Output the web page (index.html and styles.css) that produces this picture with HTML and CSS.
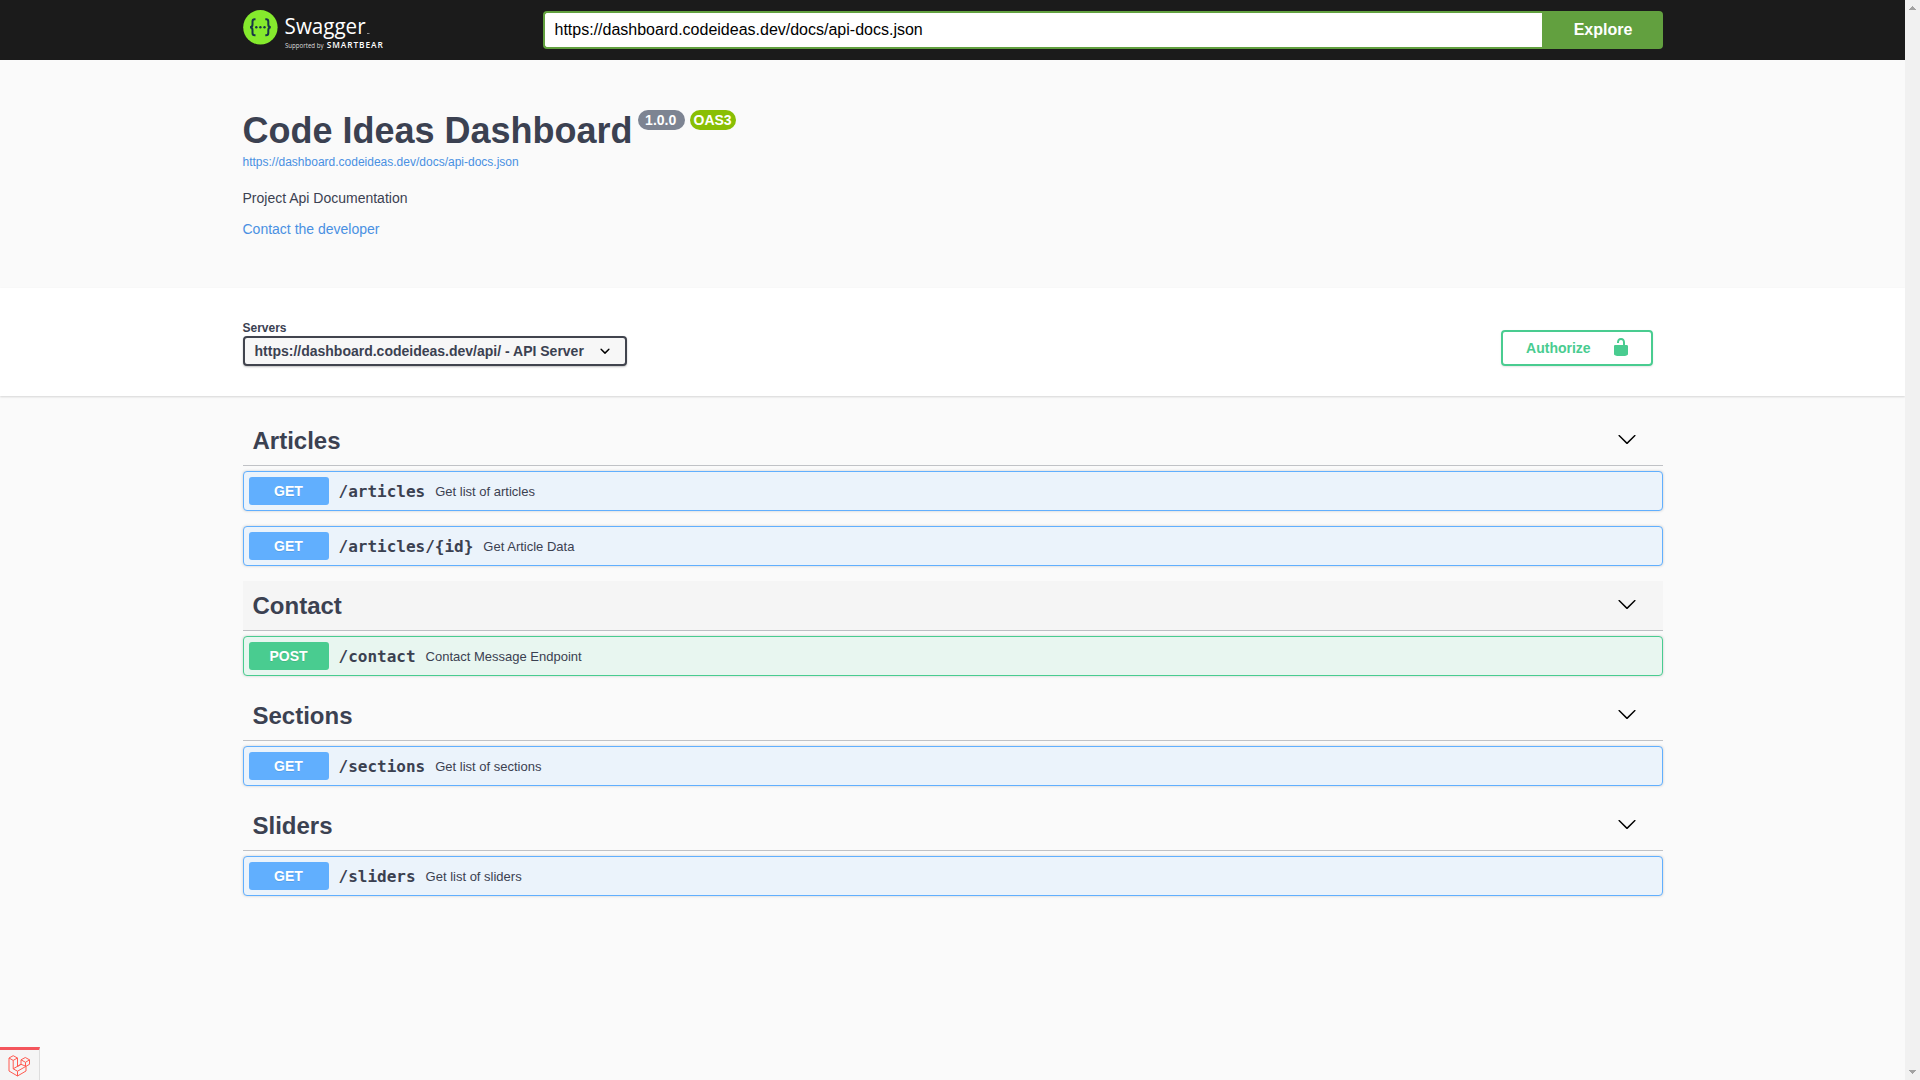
FILE: index.html
```html
<!DOCTYPE html>
<html lang="en">
<head>
<meta charset="utf-8">
<title>Code Ideas Dashboard</title>
<link rel="stylesheet" href="styles.css">
</head>
<body>
<svg class="defs" width="0" height="0" aria-hidden="true">
  <symbol id="arrow" viewBox="0 0 20 20"><path d="M17.418 6.109c.272-.268.709-.268.979 0s.271.701 0 .969l-7.908 7.83c-.27.268-.707.268-.979 0l-7.908-7.83c-.27-.268-.27-.701 0-.969.271-.268.709-.268.979 0L10 13.25l7.418-7.141z"/></symbol>
</svg>
<div class="app">
  <main class="page">
    <header class="topbar">
      <div class="wrapper topbar-row">
        <a class="logo">
          <svg width="150" height="40" viewBox="0 0 150 40">
            <circle cx="17.4" cy="17.3" r="17.2" fill="#85ea2d"/>
            <g fill="none" stroke="#173647" stroke-width="2">
              <path d="M12.5 9.300h-.8q-2.200 0-2.200 2.200v3q0 2.800-2.500 2.800 2.500 0 2.500 2.800v3q0 2.200 2.200 2.200h.8"/>
              <path d="M22.300 9.300h.8q2.200 0 2.200 2.200v3q0 2.800 2.500 2.800-2.500 0-2.500 2.800v3q0 2.200-2.200 2.200h-.8"/>
            </g>
            <g fill="#173647"><circle cx="13.300" cy="17.300" r="1.200"/><circle cx="17.400" cy="17.300" r="1.200"/><circle cx="21.500" cy="17.300" r="1.200"/></g>
            <text class="logo-name" x="41.600" y="24.400" textLength="81" lengthAdjust="spacingAndGlyphs">Swagger</text>
            <path d="M124 23.500h2.500" stroke="#aaa" stroke-width=".8"/>
            <text class="logo-by" x="42" y="38.300" textLength="38.500" lengthAdjust="spacingAndGlyphs">Supported by</text>
            <text class="logo-brand" x="83.700" y="38.200" textLength="56">SMARTBEAR</text>
          </svg>
        </a>
        <form class="search">
          <input class="search-url" type="text" value="https://dashboard.codeideas.dev/docs/api-docs.json">
          <button class="search-go" type="button">Explore</button>
        </form>
      </div>
    </header>

    <section class="wrapper info">
      <h2 class="title">Code Ideas Dashboard<span class="badges"><small class="badge">1.0.0</small><small class="badge badge-oas">OAS3</small></span></h2>
      <a class="spec-link">https://dashboard.codeideas.dev/docs/api-docs.json</a>
      <p class="description">Project Api Documentation</p>
      <a class="contact">Contact the developer</a>
    </section>

    <section class="schemes">
      <div class="wrapper schemes-row">
        <div class="servers">
          <span class="servers-title">Servers</span>
          <div class="select">
            <span>https://dashboard.codeideas.dev/api/ - API Server</span>
            <svg width="20" height="20" viewBox="0 0 20 20"><path d="M13.418 7.859a.695.695 0 0 1 .978 0 .68.68 0 0 1 0 .969l-3.908 3.830a.697.697 0 0 1-.979 0l-3.908-3.830a.68.68 0 0 1 0-.969.695.695 0 0 1 .978 0L10 11l3.418-3.141z"/></svg>
          </div>
        </div>
        <button class="authorize" type="button">
          <span>Authorize</span>
          <svg width="20" height="20" viewBox="0 0 20 20"><path d="M15.800 8H14V5.600C14 2.703 12.665 1 10 1 7.334 1 6 2.703 6 5.600V6h2v-.801C8 3.754 8.797 3 10 3c1.203 0 2 .754 2 2.199V8H4c-.553 0-1 .646-1 1.199V17c0 .549.428 1.139.951 1.307l1.197.387C5.672 18.861 6.550 19 7.100 19h5.800c.549 0 1.428-.139 1.951-.307l1.196-.387c.524-.167.953-.757.953-1.306V9.199C17 8.646 16.352 8 15.800 8z"/></svg>
        </button>
      </div>
    </section>

    <section class="wrapper tags">
      <h3 class="tag"><span>Articles</span><svg class="arrow"><use href="#arrow"/></svg></h3>
      <div class="op"><span class="method">GET</span><span class="path">/articles</span><span class="summary">Get list of articles</span></div>
      <div class="op"><span class="method">GET</span><span class="path">/articles/{id}</span><span class="summary">Get Article Data</span></div>

      <h3 class="tag tag-hover"><span>Contact</span><svg class="arrow"><use href="#arrow"/></svg></h3>
      <div class="op op-post"><span class="method">POST</span><span class="path">/contact</span><span class="summary">Contact Message Endpoint</span></div>

      <h3 class="tag"><span>Sections</span><svg class="arrow"><use href="#arrow"/></svg></h3>
      <div class="op"><span class="method">GET</span><span class="path">/sections</span><span class="summary">Get list of sections</span></div>

      <h3 class="tag"><span>Sliders</span><svg class="arrow"><use href="#arrow"/></svg></h3>
      <div class="op"><span class="method">GET</span><span class="path">/sliders</span><span class="summary">Get list of sliders</span></div>
    </section>
  </main>

  <aside class="scrollbar">
    <svg width="15" height="15" viewBox="0 0 15 15" shape-rendering="crispEdges"><path d="M4 10L7.500 6 11 10z"/></svg>
    <svg width="15" height="15" viewBox="0 0 15 15" shape-rendering="crispEdges"><path d="M4 5l3.500 4L11 5z"/></svg>
  </aside>
</div>

<div class="debugbar">
  <svg width="22" height="22" viewBox="0 0 22 22" fill="none" stroke="#ff5a50" stroke-width="1" stroke-linejoin="round">
    <path d="M1 3v13l8.500 5 8.500-5v-4.700l3.500-2V4.800L17.300 2.500 13 4.800v4.500L9.500 11.500V3L5.200.7z"/>
    <path d="M1 3l4.200 2.400L9.500 3M5.200 5.400v8.400l4.300 2.400L18 11.300M5.200 13.800l7.800-4.500 5 2M9.500 16.200V21M13 4.800l4.500 2.500 4-2.500M17.500 7.300v4"/>
  </svg>
</div>
</body>
</html>
```
FILE: styles.css
```css
* { box-sizing: border-box; }

body {
  margin: 0;
  overflow: hidden;
  background: #fafafa;
  color: #3b4151;
  font-family: "Liberation Sans", Arial, sans-serif;
}

.defs { position: absolute; }
.app { display: flex; height: 1080px; }
.page { flex: 1; }
.wrapper { width: 1460px; margin: 0 auto; padding: 0 20px; }

/* Top bar */
.topbar { height: 60px; padding-top: 10px; background: #1b1b1b; }
.topbar-row { display: flex; }
.logo { width: 300px; height: 40px; }
.logo-name { fill: #fff; font: 400 22.500px "Open Sans", sans-serif; }
.logo-by { fill: #ddd; font: 400 6.5px "Open Sans", sans-serif; }
.logo-brand { fill: #fff; font: 600 8.300px "Open Sans", sans-serif; }
.search { display: flex; flex: 1; height: 38px; margin-top: 1px; }
.search-url {
  flex: 1;
  min-width: 0;
  padding: 0 10px;
  border: 2px solid #62a03f;
  border-right: 0;
  border-radius: 4px 0 0 4px;
  outline: none;
  background: #fff;
  color: #000;
  font: 16px "Liberation Sans", Arial, sans-serif;
}
.search-go {
  width: 121px;
  padding: 0 0 0 2px;
  border: 0;
  border-radius: 0 4px 4px 0;
  background: #62a03f;
  color: #fff;
  font: bold 16px "Liberation Sans", Arial, sans-serif;
}

/* API information */
.info { height: 228px; padding-top: 50px; }
.title { display: flex; margin: 0; font-size: 36px; line-height: 41px; }
.badges { display: flex; gap: 5px; padding: 0 0 0 5px; }
.badge {
  height: 20px;
  padding: 0 8.300px 0 7.500px;
  border-radius: 20px;
  background: #7d8492;
  color: #fff;
  font-size: 14px;
  line-height: 20px;
}
.badge-oas { padding: 0 4px; background: #89bf04; }
.spec-link { display: block; margin-top: 4px; font-size: 12px; line-height: 14px; }
.spec-link, .contact { color: #4990e2; }
.description { margin: 21px 0 15px; font-size: 14px; line-height: 16px; }
.contact { display: block; font-size: 14px; line-height: 16px; }

/* Servers and authorization */
.schemes { height: 108px; background: #fff; box-shadow: 0 1px 2px rgba(0, 0, 0, .15); }
.schemes-row { display: flex; justify-content: space-between; padding-top: 33px; padding-right: 30px; }
.servers-title { display: block; font-size: 12px; font-weight: 700; line-height: 15px; }
.select {
  display: flex;
  align-items: center;
  justify-content: space-between;
  width: 384px;
  height: 30px;
  padding: 0 10px;
  border: 2px solid #41444e;
  border-radius: 4px;
  background: #f7f7f7;
  box-shadow: 0 1px 2px rgba(0, 0, 0, .25);
  font-size: 14px;
  font-weight: 700;
}
.authorize {
  display: flex;
  align-items: center;
  justify-content: space-between;
  width: 152px;
  height: 36px;
  margin-top: 9px;
  padding: 0 20px 0 23.600px;
  border: 2px solid #49cc90;
  border-radius: 4px;
  background: transparent;
  box-shadow: 0 1px 2px rgba(0, 0, 0, .1);
  color: #49cc90;
  font: bold 14px "Liberation Sans", Arial, sans-serif;
}
.authorize svg { margin-bottom: 2px; fill: #49cc90; }

/* Operations */
.tags { padding-top: 20px; }
.tag {
  display: flex;
  align-items: center;
  justify-content: space-between;
  height: 50px;
  margin: 0 0 5px;
  padding: 0 26px 0 10px;
  border-bottom: 1px solid rgba(59, 65, 81, .3);
  font-size: 24px;
}
.tag-hover { background: rgba(0, 0, 0, .02); }
.arrow { width: 20px; height: 20px; margin-bottom: 4px; fill: #000; }
.op {
  display: flex;
  align-items: center;
  height: 40px;
  margin-bottom: 15px;
  padding: 5px;
  border: 1px solid #61affe;
  border-radius: 4px;
  background: #ebf3fb;
  box-shadow: 0 0 3px rgba(0, 0, 0, .19);
}
.method {
  width: 80px;
  border-radius: 3px;
  background: #61affe;
  color: #fff;
  font-size: 14px;
  font-weight: 700;
  line-height: 28px;
  text-align: center;
  text-shadow: 0 1px 0 rgba(0, 0, 0, .1);
}
.path { padding: 0 10px; font: bold 16px "DejaVu Sans Mono", monospace; }
.summary { font-size: 13px; }
.op-post { border-color: #49cc90; background: #e8f6f0; }
.op-post .method { background: #49cc90; }

/* Window scrollbar */
.scrollbar {
  display: flex;
  flex-direction: column;
  justify-content: space-between;
  width: 15px;
  background: #f1f1f1;
}
.scrollbar svg { fill: #a3a3a3; }

/* Collapsed debug bar, over the page's bottom corner */
.debugbar {
  position: fixed;
  bottom: 0;
  left: 0;
  width: 40px;
  height: 33px;
  padding: 4.500px 0 0 8px;
  border-top: 3px solid #f4555c;
  border-right: 1px solid #ddd;
  background: #f5f5f5;
}
```
